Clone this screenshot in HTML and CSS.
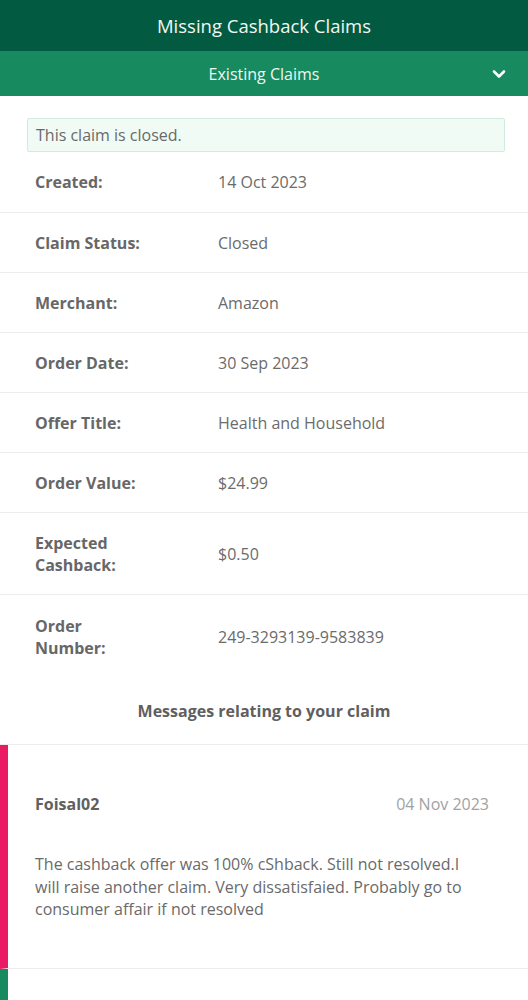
FILE: index.html
```html
<!DOCTYPE html>
<html>
<head>
<meta charset="utf-8">
<link rel="stylesheet" href="styles.css">
</head>
<body>
<header class="topbar">Missing Cashback Claims</header>
<div class="subbar">
  <span>Existing Claims</span>
  <svg class="chev" width="14" height="10" viewBox="0 0 14 10"><path d="M2 2.5 L7 7.5 L12 2.5" fill="none" stroke="#fff" stroke-width="2.6" stroke-linecap="round" stroke-linejoin="round"/></svg>
</div>
<main class="content">
  <div class="alert">This claim is closed.</div>
  <div class="details">
    <div class="row"><div class="label">Created:</div><div class="value">14 Oct 2023</div></div>
    <div class="row"><div class="label">Claim Status:</div><div class="value">Closed</div></div>
    <div class="row"><div class="label">Merchant:</div><div class="value">Amazon</div></div>
    <div class="row"><div class="label">Order Date:</div><div class="value">30 Sep 2023</div></div>
    <div class="row"><div class="label">Offer Title:</div><div class="value">Health and Household</div></div>
    <div class="row"><div class="label">Order Value:</div><div class="value">$24.99</div></div>
    <div class="row tall"><div class="label">Expected<br>Cashback:</div><div class="value">$0.50</div></div>
    <div class="row tall last"><div class="label">Order<br>Number:</div><div class="value">249-3293139-9583839</div></div>
  </div>
  <h2 class="msg-title">Messages relating to your claim</h2>
  <div class="message user">
    <div class="msg-head"><span class="author">Foisal02</span><span class="date">04 Nov 2023</span></div>
    <p class="msg-body">The cashback offer was 100% cShback. Still not resolved.I will raise another claim. Very dissatisfaied. Probably go to consumer affair if not resolved</p>
  </div>
  <div class="message staff"></div>
</main>
</body>
</html>
```
FILE: styles.css
```css
* { box-sizing: border-box; }
html, body { margin: 0; padding: 0; }
body {
  font-family: "Open Sans", "Liberation Sans", sans-serif;
  background: #fff;
  color: #666;
  width: 528px;
  overflow: hidden;
}
.topbar {
  height: 51px;
  background: #025b40;
  color: #f2f7f4;
  font-size: 18.5px;
  display: flex;
  align-items: center;
  justify-content: center;
  padding-bottom: 1px;
}
.subbar {
  height: 45px;
  background: #178a5f;
  color: #eef7f2;
  font-size: 16px;
  display: flex;
  align-items: center;
  justify-content: center;
  position: relative;
}
.chev { position: absolute; right: 22px; top: 18px; }
.content { padding-top: 22px; }
.alert {
  margin: 0 23px 0 27px;
  height: 34px;
  background: #f0fbf5;
  border: 1px solid #d2ebdf;
  border-radius: 2px;
  font-size: 16px;
  color: #6a6a6a;
  padding-left: 8px;
  display: flex;
  align-items: center;
}
.row {
  display: flex;
  align-items: center;
  height: 60px;
  border-bottom: 1px solid #ececec;
  padding-left: 35px;
  font-size: 16px;
  line-height: 22px;
}
.details .row:first-child { height: 61px; }
.row.tall { height: 82px; }
.row.last { border-bottom: none; height: 84px; }
.label { width: 183px; font-weight: 700; color: #676767; }
.value { color: #6b6b6b; }
.msg-title {
  margin: 0;
  height: 66px;
  border-bottom: 1px solid #ececec;
  font-size: 16px;
  font-weight: 700;
  color: #5f5f5f;
  display: flex;
  align-items: center;
  justify-content: center;
  padding-bottom: 2px;
}
.message {
  border-left: 8px solid #ea1a63;
  border-bottom: 1px solid #ececec;
  padding: 48px 39px 47px 27px;
}
.message.staff { border-left-color: #178a5f; border-bottom: none; height: 40px; padding: 0; }
.msg-head {
  display: flex;
  justify-content: space-between;
  font-size: 16px;
  line-height: 22px;
}
.author { font-weight: 700; color: #606060; }
.date { color: #a2a2a2; }
.msg-body {
  margin: 38px 0 0;
  font-size: 16px;
  line-height: 22.5px;
  color: #6a6a6a;
  padding-right: 14px;
}
```
